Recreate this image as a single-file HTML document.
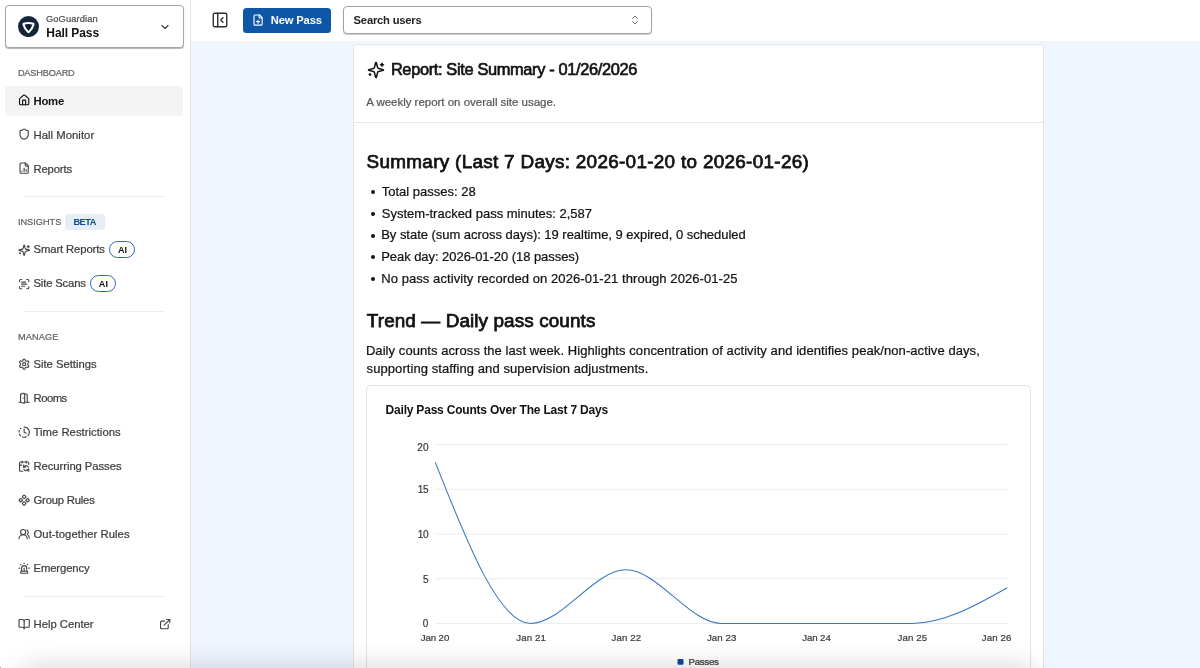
<!DOCTYPE html>
<html lang="en">
<head>
<meta charset="utf-8">
<title>Hall Pass – Report: Site Summary</title>
<style>
*{box-sizing:border-box;margin:0;padding:0}
html,body{width:1200px;height:668px;overflow:hidden}
body{position:relative;background:#eff6ff;font-family:"Liberation Sans",sans-serif;color:#111}
#app{position:absolute;left:0;top:0;width:1200px;height:668px;overflow:hidden;will-change:transform}
.abs,.ic{position:absolute;display:block}
ul{list-style:none}
.t{position:absolute;display:block;white-space:nowrap;line-height:1;font-weight:normal;list-style:none}
#sidebar{position:absolute;left:0;top:0;width:191px;height:668px;background:#fff;border-right:1px solid #e1e4e8}
#header{position:absolute;left:191px;top:0;width:1009px;height:42px;background:#fff;border-bottom:1px solid #f3f4f6}
#switcher{position:absolute;left:5px;top:5px;width:179px;height:43px;border:1px solid #a6a6a6;border-radius:4px;background:#fff;box-shadow:0 1px 1px rgba(0,0,0,.3)}
.navbg{position:absolute;left:5px;width:178px;height:30.5px;border-radius:4px;background:#f4f4f4}
.hr{position:absolute;left:24px;width:141px;height:1px;background:#ededed}
.badge{position:absolute;left:65px;top:213.7px;width:40px;height:16.3px;border-radius:3px;background:#e7edf6}
.pill{position:absolute;height:17px;width:26px;border:1px solid #2f66b3;border-radius:9px;background:#fff}
#newpass-btn{position:absolute;left:243px;top:8px;width:88px;height:24.5px;border-radius:3.5px;background:#0d57a6}
#searchbox{position:absolute;left:343px;top:6px;width:309px;height:28px;border:1px solid #a3a3a3;border-radius:4px;background:#fff;box-shadow:0 1px 1px rgba(0,0,0,.2)}
#card{position:absolute;left:353px;top:44px;width:691px;height:660px;background:#fff;border:1px solid #e3e4e6;border-radius:4px}
#carddiv{position:absolute;left:354px;top:121.5px;width:689px;height:1px;background:#e8e8e8}
#chartcard{position:absolute;left:366.3px;top:384.7px;width:664.4px;height:330px;background:#fff;border:1px solid #e3e3e3;border-radius:5px}
.bullet{position:absolute;left:371px;width:4px;height:4px;border-radius:50%;background:#111}
#chart{position:absolute;left:0;top:0;width:1200px;height:668px;overflow:visible}
#shade{position:absolute;left:26px;top:674px;width:1004px;height:20px;border-radius:10px;box-shadow:0 0 28px 6px rgba(0,0,0,.185);background:rgba(0,0,0,.185)}
</style>
</head>
<body>
<div id="app">
<aside id="sidebar">
  <div id="switcher"></div>
  <svg class="abs" style="left:18px;top:16px;width:21px;height:21px" viewBox="0 0 21 21"><circle cx="10.5" cy="10.6" r="10.5" fill="#15263a"/><path d="M5.8 7.7Q10.5 6.2 15.2 7.7Q15.7 7.9 15.5 8.6Q14.3 13.3 10.9 16Q10.5 16.3 10.1 16Q6.7 13.3 5.5 8.6Q5.3 7.9 5.8 7.7Z" fill="#101d2d" stroke="#fff" stroke-width="2.1" stroke-linejoin="round"/></svg>
  <span class="t" id="brand" style="left:45.90px;top:14.80px;font-size:9.3px;letter-spacing:0.136px;color:#4d4d4d;-webkit-text-stroke:0.22px #4d4d4d;paint-order:stroke fill;">GoGuardian</span>
  <span class="t" id="product" style="left:46.30px;top:26.90px;font-size:12px;letter-spacing:-0.074px;color:#111;font-weight:bold;">Hall Pass</span>
  <svg class="ic" style="left:158.9px;top:20.8px;width:12px;height:12px" viewBox="0 0 24 24" fill="none" stroke="#3a3a3a" stroke-width="2.3" stroke-linecap="round" stroke-linejoin="round"><path d="m6 9 6 6 6-6"/></svg>

  <span class="t" id="sec1" style="left:17.90px;top:69.10px;font-size:9.2px;letter-spacing:-0.170px;color:#616161;-webkit-text-stroke:0.22px #616161;paint-order:stroke fill;">DASHBOARD</span>
  <div class="navbg" style="top:85.5px"></div>
  <svg class="ic" style="left:17.55px;top:94.35px;width:12.3px;height:12.3px" viewBox="0 0 24 24" fill="none" stroke="#111" stroke-width="2.2" stroke-linecap="round" stroke-linejoin="round"><path d="M15 21v-8a1 1 0 0 0-1-1h-4a1 1 0 0 0-1 1v8"/><path d="M3 10a2 2 0 0 1 .709-1.528l7-5.999a2 2 0 0 1 2.582 0l7 5.999A2 2 0 0 1 21 10v9a2 2 0 0 1-2 2H5a2 2 0 0 1-2-2z"/></svg>
  <span class="t" id="n_home" style="left:33.50px;top:96.00px;font-size:11.3px;letter-spacing:-0.235px;color:#111;font-weight:bold;">Home</span>
  <svg class="ic" style="left:17.55px;top:128.35px;width:12.3px;height:12.3px" viewBox="0 0 24 24" fill="none" stroke="#444" stroke-width="2.2" stroke-linecap="round" stroke-linejoin="round"><path d="M20 13c0 5-3.5 7.5-7.66 8.95a1 1 0 0 1-.67-.01C7.5 20.5 4 18 4 13V6a1 1 0 0 1 1-1c2 0 4.5-1.2 6.24-2.72a1.17 1.17 0 0 1 1.52 0C14.51 3.81 17 5 19 5a1 1 0 0 1 1 1z"/></svg>
  <span class="t" id="n_hall" style="left:33.50px;top:130.00px;font-size:11.3px;letter-spacing:0.036px;color:#3c3c3c;-webkit-text-stroke:0.22px #3c3c3c;paint-order:stroke fill;">Hall Monitor</span>
  <svg class="ic" style="left:17.55px;top:162.35px;width:12.3px;height:12.3px" viewBox="0 0 24 24" fill="none" stroke="#444" stroke-width="2.2" stroke-linecap="round" stroke-linejoin="round"><path d="M15 2H6a2 2 0 0 0-2 2v16a2 2 0 0 0 2 2h12a2 2 0 0 0 2-2V7Z"/><path d="M14 2v4a2 2 0 0 0 2 2h4"/><path d="M8 18v-1"/><path d="M12 18v-6"/><path d="M16 18v-3"/></svg>
  <span class="t" id="n_rep" style="left:33.50px;top:164.00px;font-size:11.3px;letter-spacing:-0.168px;color:#3c3c3c;-webkit-text-stroke:0.22px #3c3c3c;paint-order:stroke fill;">Reports</span>
  <div class="hr" style="top:196px"></div>

  <span class="t" id="sec2" style="left:17.90px;top:217.90px;font-size:9.2px;letter-spacing:0.006px;color:#616161;-webkit-text-stroke:0.22px #616161;paint-order:stroke fill;">INSIGHTS</span>
  <div class="badge"></div>
  <span class="t" id="beta" style="left:73.40px;top:217.90px;font-size:9.2px;letter-spacing:-0.464px;color:#0b4a9c;font-weight:bold;">BETA</span>
  <svg class="ic" style="left:17.55px;top:243.85px;width:12.3px;height:12.3px" viewBox="0 0 24 24" fill="none" stroke="#444" stroke-width="2.2" stroke-linecap="round" stroke-linejoin="round"><path d="M9.937 15.5A2 2 0 0 0 8.5 14.063l-6.135-1.582a.5.5 0 0 1 0-.962L8.5 9.936A2 2 0 0 0 9.937 8.5l1.582-6.135a.5.5 0 0 1 .963 0L14.063 8.5A2 2 0 0 0 15.5 9.937l6.135 1.581a.5.5 0 0 1 0 .964L15.5 14.063a2 2 0 0 0-1.437 1.437l-1.582 6.135a.5.5 0 0 1-.963 0z"/><path d="M20 3v4"/><path d="M22 5h-4"/><path d="M4 17v2"/><path d="M5 18H3"/></svg>
  <span class="t" id="n_smart" style="left:33.50px;top:244.20px;font-size:11.3px;letter-spacing:-0.115px;color:#3c3c3c;-webkit-text-stroke:0.22px #3c3c3c;paint-order:stroke fill;">Smart Reports</span>
  <div class="pill" style="left:109px;top:241px"></div>
  <span class="t" id="ai1" style="left:117.90px;top:245.70px;font-size:9.1px;letter-spacing:0.133px;color:#111;font-weight:bold;">AI</span>
  <svg class="ic" style="left:17.55px;top:277.85px;width:12.3px;height:12.3px" viewBox="0 0 24 24" fill="none" stroke="#444" stroke-width="2.2" stroke-linecap="round" stroke-linejoin="round"><path d="M3 7V5a2 2 0 0 1 2-2h2"/><path d="M17 3h2a2 2 0 0 1 2 2v2"/><path d="M21 17v2a2 2 0 0 1-2 2h-2"/><path d="M7 21H5a2 2 0 0 1-2-2v-2"/><path d="M7 8h8"/><path d="M7 12h10"/><path d="M7 16h6"/></svg>
  <span class="t" id="n_scan" style="left:33.50px;top:278.20px;font-size:11.3px;letter-spacing:-0.173px;color:#3c3c3c;-webkit-text-stroke:0.22px #3c3c3c;paint-order:stroke fill;">Site Scans</span>
  <div class="pill" style="left:90px;top:275px"></div>
  <span class="t" id="ai2" style="left:98.80px;top:279.70px;font-size:9.1px;letter-spacing:0.133px;color:#111;font-weight:bold;">AI</span>
  <div class="hr" style="top:311px"></div>

  <span class="t" id="sec3" style="left:17.90px;top:333.00px;font-size:9.2px;letter-spacing:0.122px;color:#616161;-webkit-text-stroke:0.22px #616161;paint-order:stroke fill;">MANAGE</span>
  <svg class="ic" style="left:17.55px;top:358.45px;width:12.3px;height:12.3px" viewBox="0 0 24 24" fill="none" stroke="#444" stroke-width="2.2" stroke-linecap="round" stroke-linejoin="round"><path d="M12.22 2h-.44a2 2 0 0 0-2 2v.18a2 2 0 0 1-1 1.73l-.43.25a2 2 0 0 1-2 0l-.15-.08a2 2 0 0 0-2.73.73l-.22.38a2 2 0 0 0 .73 2.73l.15.1a2 2 0 0 1 1 1.72v.51a2 2 0 0 1-1 1.74l-.15.09a2 2 0 0 0-.73 2.73l.22.38a2 2 0 0 0 2.73.73l.15-.08a2 2 0 0 1 2 0l.43.25a2 2 0 0 1 1 1.73V20a2 2 0 0 0 2 2h.44a2 2 0 0 0 2-2v-.18a2 2 0 0 1 1-1.73l.43-.25a2 2 0 0 1 2 0l.15.08a2 2 0 0 0 2.73-.73l.22-.39a2 2 0 0 0-.73-2.73l-.15-.08a2 2 0 0 1-1-1.74v-.5a2 2 0 0 1 1-1.74l.15-.09a2 2 0 0 0 .73-2.73l-.22-.38a2 2 0 0 0-2.73-.73l-.15.08a2 2 0 0 1-2 0l-.43-.25a2 2 0 0 1-1-1.73V4a2 2 0 0 0-2-2z"/><circle cx="12" cy="12" r="3"/></svg>
  <span class="t" id="n_set" style="left:33.50px;top:359.20px;font-size:11.3px;letter-spacing:-0.031px;color:#3c3c3c;-webkit-text-stroke:0.22px #3c3c3c;paint-order:stroke fill;">Site Settings</span>
  <svg class="ic" style="left:17.55px;top:392.45px;width:12.3px;height:12.3px" viewBox="0 0 24 24" fill="none" stroke="#444" stroke-width="2.2" stroke-linecap="round" stroke-linejoin="round"><path d="M13 4h3a2 2 0 0 1 2 2v14"/><path d="M2 20h3"/><path d="M13 20h9"/><path d="M10 12v.01"/><path d="M13 4.562v16.157a1 1 0 0 1-1.242.97L5 20V5.562a2 2 0 0 1 1.515-1.94l4-1A2 2 0 0 1 13 4.561Z"/></svg>
  <span class="t" id="n_rooms" style="left:33.50px;top:393.20px;font-size:11.3px;letter-spacing:-0.509px;color:#3c3c3c;-webkit-text-stroke:0.22px #3c3c3c;paint-order:stroke fill;">Rooms</span>
  <svg class="ic" style="left:17.55px;top:426.45px;width:12.3px;height:12.3px" viewBox="0 0 24 24" fill="none" stroke="#444" stroke-width="2.2" stroke-linecap="round" stroke-linejoin="round"><path d="M12 2a10 10 0 0 1 7.38 16.75"/><path d="M12 6v6l4 2"/><path d="M2.5 8.875a10 10 0 0 0-.5 3"/><path d="M2.83 16a10 10 0 0 0 2.43 3.4"/><path d="M4.636 5.235a10 10 0 0 1 .891-.857"/><path d="M8.644 21.42a10 10 0 0 0 7.631-.38"/></svg>
  <span class="t" id="n_time" style="left:33.50px;top:427.20px;font-size:11.3px;letter-spacing:0.020px;color:#3c3c3c;-webkit-text-stroke:0.22px #3c3c3c;paint-order:stroke fill;">Time Restrictions</span>
  <svg class="ic" style="left:17.55px;top:460.45px;width:12.3px;height:12.3px" viewBox="0 0 24 24" fill="none" stroke="#444" stroke-width="2.2" stroke-linecap="round" stroke-linejoin="round"><path d="M11 10v4h4"/><path d="m11 14 1.535-1.605a5 5 0 0 1 8 1.5"/><path d="M16 2v4"/><path d="m21 18-1.535 1.605a5 5 0 0 1-8-1.5"/><path d="M21 22v-4h-4"/><path d="M21 8.5V6a2 2 0 0 0-2-2H5a2 2 0 0 0-2 2v14a2 2 0 0 0 2 2h4.3"/><path d="M3 10h4"/><path d="M8 2v4"/></svg>
  <span class="t" id="n_rec" style="left:33.50px;top:461.20px;font-size:11.3px;letter-spacing:-0.074px;color:#3c3c3c;-webkit-text-stroke:0.22px #3c3c3c;paint-order:stroke fill;">Recurring Passes</span>
  <svg class="ic" style="left:17.55px;top:494.45px;width:12.3px;height:12.3px" viewBox="0 0 24 24" fill="none" stroke="#444" stroke-width="2.2" stroke-linecap="round" stroke-linejoin="round"><path d="M15.536 11.293a1 1 0 0 0 0 1.414l2.376 2.377a1 1 0 0 0 1.414 0l2.377-2.377a1 1 0 0 0 0-1.414l-2.377-2.377a1 1 0 0 0-1.414 0z"/><path d="M2.297 11.293a1 1 0 0 0 0 1.414l2.377 2.377a1 1 0 0 0 1.414 0l2.377-2.377a1 1 0 0 0 0-1.414L6.088 8.916a1 1 0 0 0-1.414 0z"/><path d="M8.916 17.912a1 1 0 0 0 0 1.415l2.377 2.376a1 1 0 0 0 1.414 0l2.377-2.376a1 1 0 0 0 0-1.415l-2.377-2.376a1 1 0 0 0-1.414 0z"/><path d="M8.916 4.674a1 1 0 0 0 0 1.414l2.377 2.376a1 1 0 0 0 1.414 0l2.377-2.376a1 1 0 0 0 0-1.414l-2.377-2.377a1 1 0 0 0-1.414 0z"/></svg>
  <span class="t" id="n_grp" style="left:33.50px;top:495.20px;font-size:11.3px;letter-spacing:-0.207px;color:#3c3c3c;-webkit-text-stroke:0.22px #3c3c3c;paint-order:stroke fill;">Group Rules</span>
  <svg class="ic" style="left:17.55px;top:528.45px;width:12.3px;height:12.3px" viewBox="0 0 24 24" fill="none" stroke="#444" stroke-width="2.2" stroke-linecap="round" stroke-linejoin="round"><path d="M18 21a8 8 0 0 0-16 0"/><circle cx="10" cy="8" r="5"/><path d="M22 20c0-3.37-2-6.5-4-8a5 5 0 0 0-.45-8.3"/></svg>
  <span class="t" id="n_out" style="left:33.50px;top:529.20px;font-size:11.3px;letter-spacing:0.036px;color:#3c3c3c;-webkit-text-stroke:0.22px #3c3c3c;paint-order:stroke fill;">Out-together Rules</span>
  <svg class="ic" style="left:17.55px;top:562.45px;width:12.3px;height:12.3px" viewBox="0 0 24 24" fill="none" stroke="#444" stroke-width="2.2" stroke-linecap="round" stroke-linejoin="round"><path d="M7 18v-6a5 5 0 1 1 10 0v6"/><path d="M5 21a1 1 0 0 0 1 1h12a1 1 0 0 0 1-1v-1a2 2 0 0 0-2-2H7a2 2 0 0 0-2 2z"/><path d="M21 12h1"/><path d="M18.5 4.5 18 5"/><path d="M2 12h1"/><path d="M12 2v1"/><path d="m4.929 4.929.707.707"/><path d="M12 12v6"/></svg>
  <span class="t" id="n_em" style="left:33.50px;top:563.20px;font-size:11.3px;letter-spacing:-0.123px;color:#3c3c3c;-webkit-text-stroke:0.22px #3c3c3c;paint-order:stroke fill;">Emergency</span>
  <div class="hr" style="top:596px"></div>
  <svg class="ic" style="left:17.85px;top:618.35px;width:12.3px;height:12.3px" viewBox="0 0 24 24" fill="none" stroke="#444" stroke-width="2.2" stroke-linecap="round" stroke-linejoin="round"><path d="M12 7v14"/><path d="M3 18a1 1 0 0 1-1-1V4a1 1 0 0 1 1-1h5a4 4 0 0 1 4 4 4 4 0 0 1 4-4h5a1 1 0 0 1 1 1v13a1 1 0 0 1-1 1h-6a3 3 0 0 0-3 3 3 3 0 0 0-3-3z"/></svg>
  <span class="t" id="n_help" style="left:33.50px;top:619.20px;font-size:11.3px;letter-spacing:-0.022px;color:#3c3c3c;-webkit-text-stroke:0.22px #3c3c3c;paint-order:stroke fill;">Help Center</span>
  <svg class="ic" style="left:158.85px;top:618.35px;width:12.3px;height:12.3px" viewBox="0 0 24 24" fill="none" stroke="#444" stroke-width="2.2" stroke-linecap="round" stroke-linejoin="round"><path d="M15 3h6v6"/><path d="M10 14 21 3"/><path d="M18 13v6a2 2 0 0 1-2 2H5a2 2 0 0 1-2-2V8a2 2 0 0 1 2-2h6"/></svg>
</aside>

<header id="header"></header>
<svg class="ic" style="left:210.6px;top:11.3px;width:18px;height:18px" viewBox="0 0 24 24" fill="none" stroke="#2a2a2a" stroke-width="1.8" stroke-linecap="round" stroke-linejoin="round"><rect width="18" height="18" x="3" y="3" rx="2"/><path d="M9 3v18"/><path d="m16 15-3-3 3-3"/></svg>
<div id="newpass-btn"></div>
<svg class="ic" style="left:252px;top:13.6px;width:12.2px;height:12.2px" viewBox="0 0 24 24" fill="none" stroke="#fff" stroke-width="2.2" stroke-linecap="round" stroke-linejoin="round"><path d="M15 2H6a2 2 0 0 0-2 2v16a2 2 0 0 0 2 2h12a2 2 0 0 0 2-2V7Z"/><path d="M14 2v4a2 2 0 0 0 2 2h4"/><path d="M9 15h6"/><path d="M12 18v-6"/></svg>
<span class="t" id="newpass" style="left:270.70px;top:15.20px;font-size:11.2px;letter-spacing:-0.131px;color:#fff;font-weight:bold;">New Pass</span>
<div id="searchbox"></div>
<span class="t" id="search" style="left:353.60px;top:15.20px;font-size:11.2px;letter-spacing:-0.196px;color:#222;font-weight:bold;">Search users</span>
<svg class="ic" style="left:629px;top:14px;width:12px;height:12px" viewBox="0 0 24 24" fill="none" stroke="#666" stroke-width="1.8" stroke-linecap="round" stroke-linejoin="round"><path d="m7 15 5 5 5-5"/><path d="m7 9 5-5 5 5"/></svg>

<main id="card"></main>
<svg class="ic" style="left:366.7px;top:61px;width:18px;height:18px" viewBox="0 0 24 24" fill="none" stroke="#111" stroke-width="2" stroke-linecap="round" stroke-linejoin="round"><path d="M9.937 15.5A2 2 0 0 0 8.5 14.063l-6.135-1.582a.5.5 0 0 1 0-.962L8.5 9.936A2 2 0 0 0 9.937 8.5l1.582-6.135a.5.5 0 0 1 .963 0L14.063 8.5A2 2 0 0 0 15.5 9.937l6.135 1.581a.5.5 0 0 1 0 .964L15.5 14.063a2 2 0 0 0-1.437 1.437l-1.582 6.135a.5.5 0 0 1-.963 0z"/><path d="M20 3v4"/><path d="M22 5h-4"/><path d="M4 17v2"/><path d="M5 18H3"/></svg>
<h1 class="t" id="title" style="left:390.90px;top:61.30px;font-size:16.4px;letter-spacing:-0.353px;color:#111;-webkit-text-stroke:0.65px #111;paint-order:stroke fill;">Report: Site Summary - 01/26/2026</h1>
<p class="t" id="subtitle" style="left:366.20px;top:96.50px;font-size:11.5px;letter-spacing:-0.017px;color:#555;-webkit-text-stroke:0.22px #555;paint-order:stroke fill;">A weekly report on overall site usage.</p>
<div id="carddiv"></div>
<h2 class="t" id="h2a" style="left:366.60px;top:153.20px;font-size:18.9px;letter-spacing:0.300px;color:#111;-webkit-text-stroke:0.75px #111;paint-order:stroke fill;">Summary (Last 7 Days: 2026-01-20 to 2026-01-26)</h2>
<div class="bullet" style="top:190.2px"></div>
<div class="bullet" style="top:211.9px"></div>
<div class="bullet" style="top:233.6px"></div>
<div class="bullet" style="top:255.3px"></div>
<div class="bullet" style="top:277px"></div>
<ul>
<li class="t" id="li1" style="left:381.70px;top:184.90px;font-size:13px;letter-spacing:-0.001px;color:#111;-webkit-text-stroke:0.22px #111;paint-order:stroke fill;">Total passes: 28</li>
<li class="t" id="li2" style="left:381.80px;top:206.60px;font-size:13px;letter-spacing:-0.001px;color:#111;-webkit-text-stroke:0.22px #111;paint-order:stroke fill;">System-tracked pass minutes: 2,587</li>
<li class="t" id="li3" style="left:381.20px;top:228.30px;font-size:13px;letter-spacing:-0.029px;color:#111;-webkit-text-stroke:0.22px #111;paint-order:stroke fill;">By state (sum across days): 19 realtime, 9 expired, 0 scheduled</li>
<li class="t" id="li4" style="left:381.20px;top:250.00px;font-size:13px;letter-spacing:-0.049px;color:#111;-webkit-text-stroke:0.22px #111;paint-order:stroke fill;">Peak day: 2026-01-20 (18 passes)</li>
<li class="t" id="li5" style="left:381.20px;top:271.70px;font-size:13px;letter-spacing:0.077px;color:#111;-webkit-text-stroke:0.22px #111;paint-order:stroke fill;">No pass activity recorded on 2026-01-21 through 2026-01-25</li>
</ul>
<h2 class="t" id="h2b" style="left:366.80px;top:312.30px;font-size:18.9px;letter-spacing:0.103px;color:#111;-webkit-text-stroke:0.75px #111;paint-order:stroke fill;">Trend — Daily pass counts</h2>
<p>
<span class="t" id="p1" style="left:365.90px;top:343.90px;font-size:13px;letter-spacing:0.071px;color:#111;-webkit-text-stroke:0.22px #111;paint-order:stroke fill;">Daily counts across the last week. Highlights concentration of activity and identifies peak/non-active days,</span>
<span class="t" id="p2" style="left:366.60px;top:362.20px;font-size:13px;letter-spacing:0.079px;color:#111;-webkit-text-stroke:0.22px #111;paint-order:stroke fill;">supporting staffing and supervision adjustments.</span>
</p>
<section id="chartcard"></section>
<h3 class="t" id="ctitle" style="left:385.60px;top:404.10px;font-size:12px;letter-spacing:-0.206px;color:#111;font-weight:bold;">Daily Pass Counts Over The Last 7 Days</h3>
<svg id="chart" viewBox="0 0 1200 668">
  <path d="M435.3 444.5H1007.5M435.3 489.3H1007.5M435.3 534.1H1007.5M435.3 578.7H1007.5M435.3 623.4H1007.5" fill="none" stroke="#ebebeb" stroke-width="1"/>
  <path d="M435.3 462.4C467.1 543 498.9 623.4 530.7 623.4C562.4 623.4 594.2 569.8 626 569.8C657.8 569.8 689.6 623.4 721.3 623.4L912 623.4C943.8 623.4 975.6 605.6 1007.3 587.7" fill="none" stroke="#3577c0" stroke-width="1.05"/>
  <rect x="677.5" y="659" width="6" height="5.8" rx="1" fill="#0b4a9e"/>
</svg>
<span class="t" id="y20" style="left:417.14px;top:443.10px;font-size:10px;letter-spacing:0.300px;color:#3a3a3a;-webkit-text-stroke:0.22px #3a3a3a;paint-order:stroke fill;">20</span><span class="t" id="y15" style="left:417.74px;top:485.00px;font-size:10px;letter-spacing:-0.300px;color:#3a3a3a;-webkit-text-stroke:0.22px #3a3a3a;paint-order:stroke fill;">15</span><span class="t" id="y10" style="left:417.74px;top:529.80px;font-size:10px;letter-spacing:-0.300px;color:#3a3a3a;-webkit-text-stroke:0.22px #3a3a3a;paint-order:stroke fill;">10</span><span class="t" id="y5" style="left:423.00px;top:574.60px;font-size:10px;letter-spacing:0.000px;color:#3a3a3a;-webkit-text-stroke:0.22px #3a3a3a;paint-order:stroke fill;">5</span><span class="t" id="y0" style="left:422.70px;top:618.90px;font-size:10px;letter-spacing:0.000px;color:#3a3a3a;-webkit-text-stroke:0.22px #3a3a3a;paint-order:stroke fill;">0</span>
<span class="t" id="x0" style="left:420.70px;top:632.80px;font-size:9.7px;letter-spacing:-0.100px;color:#3a3a3a;-webkit-text-stroke:0.22px #3a3a3a;paint-order:stroke fill;">Jan 20</span><span class="t" id="x1" style="left:516.30px;top:632.80px;font-size:9.7px;letter-spacing:0.100px;color:#3a3a3a;-webkit-text-stroke:0.22px #3a3a3a;paint-order:stroke fill;">Jan 21</span><span class="t" id="x2" style="left:611.60px;top:632.80px;font-size:9.7px;letter-spacing:0.100px;color:#3a3a3a;-webkit-text-stroke:0.22px #3a3a3a;paint-order:stroke fill;">Jan 22</span><span class="t" id="x3" style="left:706.90px;top:632.80px;font-size:9.7px;letter-spacing:0.100px;color:#3a3a3a;-webkit-text-stroke:0.22px #3a3a3a;paint-order:stroke fill;">Jan 23</span><span class="t" id="x4" style="left:802.20px;top:632.80px;font-size:9.7px;letter-spacing:-0.100px;color:#3a3a3a;-webkit-text-stroke:0.22px #3a3a3a;paint-order:stroke fill;">Jan 24</span><span class="t" id="x5" style="left:897.50px;top:632.80px;font-size:9.7px;letter-spacing:0.100px;color:#3a3a3a;-webkit-text-stroke:0.22px #3a3a3a;paint-order:stroke fill;">Jan 25</span><span class="t" id="x6" style="left:981.80px;top:632.80px;font-size:9.7px;letter-spacing:0.100px;color:#3a3a3a;-webkit-text-stroke:0.22px #3a3a3a;paint-order:stroke fill;">Jan 26</span>
<span class="t" id="legend" style="left:688.50px;top:657.00px;font-size:9.7px;letter-spacing:-0.285px;color:#333;-webkit-text-stroke:0.22px #333;paint-order:stroke fill;">Passes</span>
<div id="shade"></div>
<div class="abs" style="left:0;top:667px;width:1px;height:1px;background:#a8a8a8"></div>
</div>
</body>
</html>
